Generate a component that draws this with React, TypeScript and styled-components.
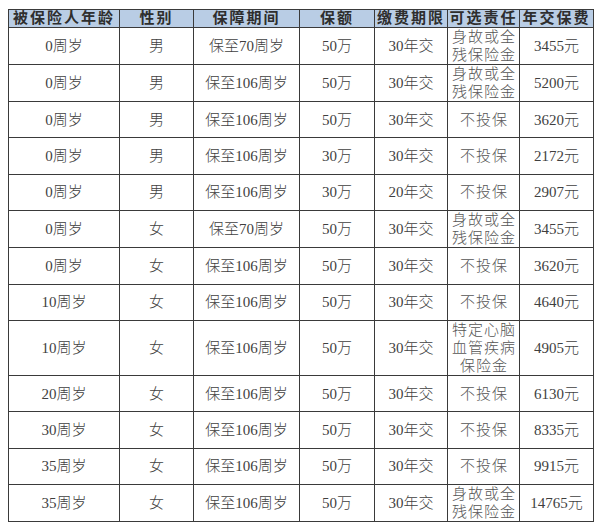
import React from 'react';
import styled, { createGlobalStyle } from 'styled-components';

const GlobalStyle = createGlobalStyle`
  html, body {
    margin: 0;
    padding: 0;
    background: #ffffff;
  }
  body {
    font-family: "Liberation Serif", "Noto Sans CJK SC", serif;
  }
`;

const Page = styled.div`
  padding: 9px 7px 8px 8px;
  width: 600px;
  box-sizing: border-box;
`;

const Table = styled.table`
  border-collapse: collapse;
  width: 585px;
  table-layout: fixed;
  border: 1.5px solid #3a3a3a;
  color: #3f3f3f;
`;

const HeadCell = styled.th`
  background: #b9cde5;
  height: 17px;
  padding: 0;
  border: 1px solid #3a3a3a;
  font-size: 15px;
  font-weight: 700;
  letter-spacing: 2px;
  line-height: 17px;
  text-align: center;
  color: #2e2e2e;
  white-space: nowrap;
  overflow: hidden;
`;

const Row = styled.tr<{ $tall?: boolean }>`
  height: ${(p) => (p.$tall ? '55px' : '36.4px')};
`;

const Cell = styled.td`
  padding: 0;
  border: 1px solid #3a3a3a;
  font-size: 15px;
  font-weight: 300;
  line-height: 18px;
  text-align: center;
  vertical-align: middle;
  white-space: nowrap;
`;

const Multi = styled.div`
  font-size: 15px;
  line-height: 18px;
  letter-spacing: 1px;
  color: #555;
  padding-left: 1px;
`;

const columns = [
  { title: '被保险人年龄', w: 111 },
  { title: '性别', w: 74 },
  { title: '保障期间', w: 106 },
  { title: '保额', w: 75 },
  { title: '缴费期限', w: 73 },
  { title: '可选责任', w: 72 },
  { title: '年交保费', w: 74 },
];

type Item = {
  age: string;
  sex: string;
  term: string;
  amount: string;
  pay: string;
  extra: string[];
  fee: string;
};

const full = ['身故或全', '残保险金'];
const none = ['不投保'];

const rows: Item[] = [
  { age: '0周岁', sex: '男', term: '保至70周岁', amount: '50万', pay: '30年交', extra: full, fee: '3455元' },
  { age: '0周岁', sex: '男', term: '保至106周岁', amount: '50万', pay: '30年交', extra: full, fee: '5200元' },
  { age: '0周岁', sex: '男', term: '保至106周岁', amount: '50万', pay: '30年交', extra: none, fee: '3620元' },
  { age: '0周岁', sex: '男', term: '保至106周岁', amount: '30万', pay: '30年交', extra: none, fee: '2172元' },
  { age: '0周岁', sex: '男', term: '保至106周岁', amount: '30万', pay: '20年交', extra: none, fee: '2907元' },
  { age: '0周岁', sex: '女', term: '保至70周岁', amount: '50万', pay: '30年交', extra: full, fee: '3455元' },
  { age: '0周岁', sex: '女', term: '保至106周岁', amount: '50万', pay: '30年交', extra: none, fee: '3620元' },
  { age: '10周岁', sex: '女', term: '保至106周岁', amount: '50万', pay: '30年交', extra: none, fee: '4640元' },
  { age: '10周岁', sex: '女', term: '保至106周岁', amount: '50万', pay: '30年交', extra: ['特定心脑', '血管疾病', '保险金'], fee: '4905元' },
  { age: '20周岁', sex: '女', term: '保至106周岁', amount: '50万', pay: '30年交', extra: none, fee: '6130元' },
  { age: '30周岁', sex: '女', term: '保至106周岁', amount: '50万', pay: '30年交', extra: none, fee: '8335元' },
  { age: '35周岁', sex: '女', term: '保至106周岁', amount: '50万', pay: '30年交', extra: none, fee: '9915元' },
  { age: '35周岁', sex: '女', term: '保至106周岁', amount: '50万', pay: '30年交', extra: full, fee: '14765元' },
];

const App = () => {
  return (
    <>
      <GlobalStyle />
      <Page>
        <Table>
          <colgroup>
            {columns.map((c) => (
              <col key={c.title} style={{ width: c.w }} />
            ))}
          </colgroup>
          <thead>
            <tr>
              {columns.map((c) => (
                <HeadCell key={c.title}>{c.title}</HeadCell>
              ))}
            </tr>
          </thead>
          <tbody>
            {rows.map((r, i) => (
              <Row key={i} $tall={r.extra.length > 2}>
                <Cell>{r.age}</Cell>
                <Cell>{r.sex}</Cell>
                <Cell>{r.term}</Cell>
                <Cell>{r.amount}</Cell>
                <Cell>{r.pay}</Cell>
                <Cell>
                  {r.extra.map((line) => (
                    <Multi key={line}>{line}</Multi>
                  ))}
                </Cell>
                <Cell>{r.fee}</Cell>
              </Row>
            ))}
          </tbody>
        </Table>
      </Page>
    </>
  );
};

export default App;
